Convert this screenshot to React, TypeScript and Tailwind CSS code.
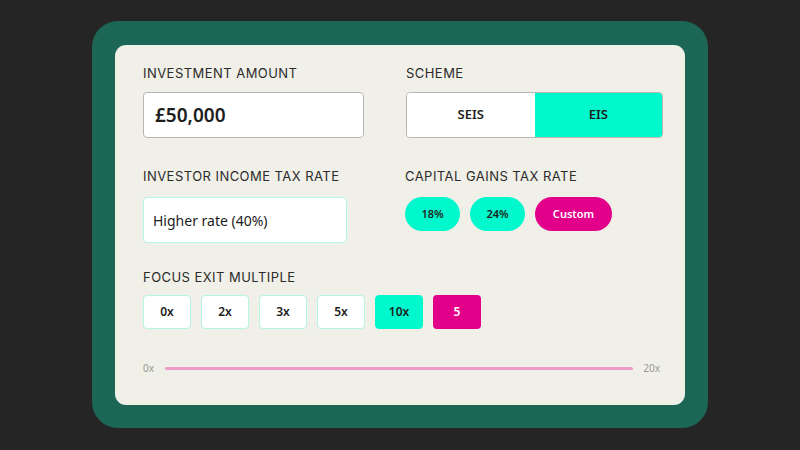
import { useState } from 'react';

const label = 'text-[13px] leading-[16px] tracking-[0.035em] text-[#2b2b2b] uppercase font-[Inter,sans-serif]';

export default function App() {
  const [scheme, setScheme] = useState<'SEIS' | 'EIS'>('EIS');
  const [cgt, setCgt] = useState('Custom');
  const [multiple, setMultiple] = useState('10x');

  return (
    <div
      className="w-[800px] h-[450px] bg-[#252525] flex items-start justify-center pt-[21px]"
      style={{ fontFamily: '"Noto Sans", Inter, sans-serif' }}
    >
      <div className="w-[616px] h-[407px] bg-[#1c6656] rounded-[26px] p-[23px] pt-[24px]">
        <div className="w-[570px] h-[360px] bg-[#f0efe8] rounded-[11px] pt-[20px] pl-[28px] pr-[22px]">
          <div className="grid grid-cols-[262px_258px]">
            <div>
              <div className={label}>Investment amount</div>
              <div className="mt-[11px] w-[221px] h-[46px] bg-white border border-[#b7b6b0] rounded-[4px] flex items-center pl-[11px] text-[19px] font-semibold text-[#1d1d1d]">
                £50,000
              </div>
            </div>
            <div>
              <div className={`${label} pl-px`}>Scheme</div>
              <div className="mt-[11px] ml-px w-[257px] h-[46px] border border-[#b7b6b0] rounded-[4px] flex overflow-hidden">
                {(['SEIS', 'EIS'] as const).map(s => (
                  <button
                    key={s}
                    onClick={() => setScheme(s)}
                    className={`flex-1 text-[13px] font-semibold text-[#1d1d1d] ${scheme === s ? 'bg-[#00f8cc]' : 'bg-white'}`}
                  >
                    {s}
                  </button>
                ))}
              </div>
            </div>
          </div>

          <div className="grid grid-cols-[262px_258px] mt-[30px]">
            <div>
              <div className={label}>Investor income tax rate</div>
              <div className="mt-[13px] w-[204px] h-[46px] bg-white border border-[#b4f5e4] rounded-[4px] flex items-center pl-[9px] text-[14px] text-[#1d1d1d]">
                Higher rate (40%)
              </div>
            </div>
            <div>
              <div className={label}>Capital gains tax rate</div>
              <div className="mt-[13px] flex gap-[10px]">
                {['18%', '24%', 'Custom'].map(c => (
                  <button
                    key={c}
                    onClick={() => setCgt(c)}
                    className={`h-[34px] rounded-full text-[11px] font-semibold ${c === 'Custom' ? 'w-[77px]' : 'w-[55px]'} ${cgt === c ? 'bg-[#e2008a] text-white' : 'bg-[#00f8cc] text-[#1d1d1d]'}`}
                  >
                    {c}
                  </button>
                ))}
              </div>
            </div>
          </div>

          <div className={`${label} mt-[26px]`}>Focus exit multiple</div>
          <div className="mt-[10px] flex gap-[10px]">
            {['0x', '2x', '3x', '5x', '10x'].map(m => (
              <button
                key={m}
                onClick={() => setMultiple(m)}
                className={`w-[48px] h-[34px] rounded-[4px] text-[12px] font-semibold text-[#1d1d1d] border ${multiple === m ? 'bg-[#00f8cc] border-[#00f8cc]' : 'bg-white border-[#b4f5e4]'}`}
              >
                {m}
              </button>
            ))}
            <div className="w-[48px] h-[34px] rounded-[4px] bg-[#e2008a] flex items-center justify-center text-[12px] font-semibold text-white">
              5
            </div>
          </div>

          <div className="mt-[31px] h-[16px] flex items-center gap-[10px] pr-[3px] text-[10px] text-[#9a9a96]">
            <span className="w-[12px]">0x</span>
            <div className="flex-1 h-[3px] rounded-full bg-[#f19bcb]" />
            <span>20x</span>
          </div>
        </div>
      </div>
    </div>
  );
}
